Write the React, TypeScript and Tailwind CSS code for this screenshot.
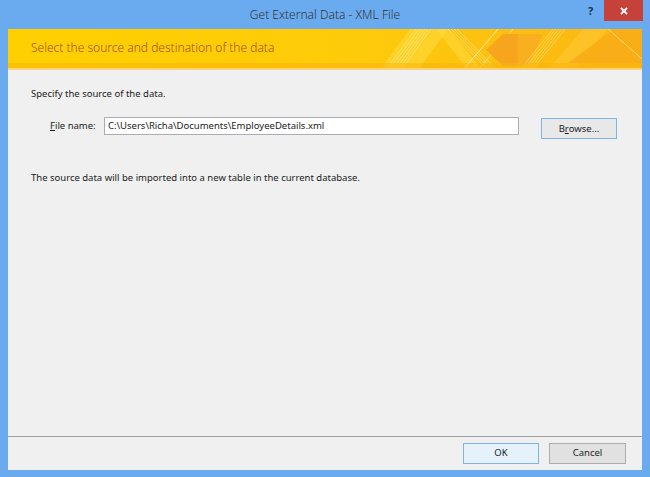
import React from 'react';

const BannerArt = () => (
	<svg className="absolute inset-0 h-full w-full" viewBox="0 0 634 41" preserveAspectRatio="none">
		<defs>
			<linearGradient id="bannerBg" x1="0" y1="0" x2="1" y2="0">
				<stop offset="0" stopColor="#ffd000" />
				<stop offset="0.55" stopColor="#fecb0a" />
				<stop offset="1" stopColor="#fbb515" />
			</linearGradient>
		</defs>
		<rect x="0" y="0" width="634" height="41" fill="url(#bannerBg)" />
		{/* light diagonal bands */}
		<polygon points="372,41 402,0 440,0 410,41" fill="#ffe14d" opacity="0.45" />
		{[0, 3, 6, 9, 12, 15].map((o) => (
			<line key={o} x1={378 + o} y1="41" x2={408 + o} y2="0" stroke="#fff3b0" strokeWidth="0.6" opacity="0.8" />
		))}
		<polygon points="440,0 475,41 460,41 428,0" fill="#ffe44f" opacity="0.4" />
		{[0, 3, 6, 9].map((o) => (
			<line key={o} x1={440 + o} y1="0" x2={480 + o} y2="41" stroke="#fff3b0" strokeWidth="0.6" opacity="0.8" />
		))}
		<line x1="455" y1="41" x2="490" y2="0" stroke="#fff6c8" strokeWidth="0.8" />
		<line x1="470" y1="41" x2="505" y2="0" stroke="#fff6c8" strokeWidth="0.6" />
		{/* arrow */}
		<polygon points="495,5 478,21 495,37 510,37 510,5" fill="#f7a51c" />
		<polygon points="510,5 535,5 520,37 510,37" fill="#f9b020" />
		{[0, 3, 6, 9, 12].map((o) => (
			<line key={o} x1={512 + o} y1="41" x2={545 + o} y2="0" stroke="#ffe88a" strokeWidth="0.6" opacity="0.9" />
		))}
		<polygon points="540,41 575,0 600,0 565,41" fill="#ffd54a" opacity="0.35" />
		{/* right orange wedge */}
		<polygon points="560,34 606,0 634,0 634,34" fill="#f8ab18" opacity="0.85" />
		<line x1="600" y1="0" x2="634" y2="30" stroke="#ffe27a" strokeWidth="0.8" />
		<rect x="0" y="34" width="634" height="5" fill="#f7b50c" opacity="0.55" />
		<rect x="0" y="39" width="634" height="2" fill="#fdd27a" />
	</svg>
);

export default function App() {
	return (
		<div className="w-[650px] h-[477px] bg-[#6aabf0] flex flex-col font-['Noto_Sans',sans-serif] text-[#1e1e1e] overflow-hidden">
			<div className="relative h-[29px] flex items-center justify-center shrink-0">
				<span className="text-[12px] font-light text-[#333333]">Get External Data - XML File</span>
				<span className="absolute left-[588px] top-[3px] text-[11px] font-bold text-[#1f3147]">?</span>
				<div className="absolute left-[604px] top-0 w-[39px] h-[21px] bg-[#c7413b] flex items-center justify-center">
					<svg width="8" height="8" viewBox="0 0 8 8">
						<path d="M1 1 L7 7 M7 1 L1 7" stroke="#ffffff" strokeWidth="1.8" />
					</svg>
				</div>
			</div>
			<div className="mx-[8px] mb-[7px] flex-1 flex flex-col bg-[#f0f0f0]">
				<div className="relative h-[41px] shrink-0">
					<BannerArt />
					<div className="relative h-full flex items-center pl-[23px] pb-[3px] text-[12px] font-light text-[#a4520e]">
						Select the source and destination of the data
					</div>
				</div>
				<div className="flex-1 flex flex-col text-[9.5px] text-[#1b1b1b]">
					<p className="mt-[17px] ml-[23px]">Specify the source of the data.</p>
					<div className="mt-[16px] flex items-start">
						<label className="ml-[42px] mt-[2px] w-[54px]">
							<span className="underline">F</span>ile name:
						</label>
						<div className="w-[415px] h-[18px] bg-white border border-[#abadb3] flex items-center px-[3px]">
							C:\Users\Richa\Documents\EmployeeDetails.xml
						</div>
						<button className="ml-[22px] mt-[1px] w-[76px] h-[21px] border border-[#7eb4ea] bg-[#e8e8e8] flex items-center justify-center">
							B<span className="underline">r</span>owse...
						</button>
					</div>
					<p className="mt-[32px] ml-[23px]">The source data will be imported into a new table in the current database.</p>
				</div>
				<div className="h-[34px] shrink-0 border-t border-[#a0a0a0] flex items-start justify-end pt-[6px] pr-[16px] gap-[10px] text-[9.5px]">
					<button className="w-[76px] h-[21px] border border-[#7eb4ea] bg-[#e5f1fb] flex items-center justify-center">OK</button>
					<button className="w-[77px] h-[21px] border border-[#adadad] bg-[#e1e1e1] flex items-center justify-center">Cancel</button>
				</div>
			</div>
		</div>
	);
}
